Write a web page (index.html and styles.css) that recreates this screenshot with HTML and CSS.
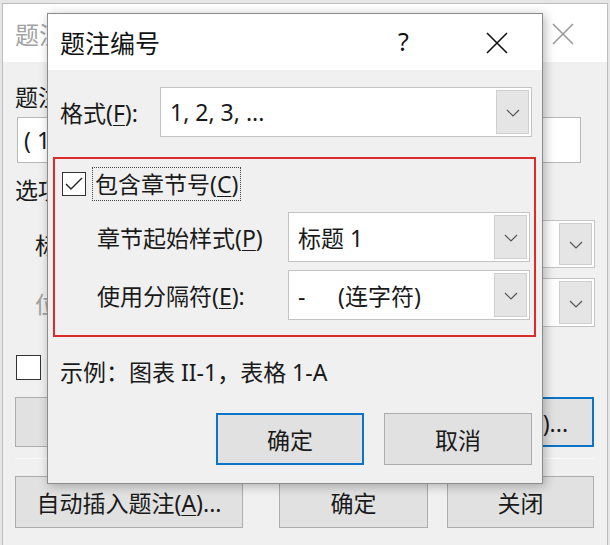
FILE: index.html
```html
<!DOCTYPE html>
<html lang="zh-CN">
<head>
<meta charset="utf-8">
<title>题注编号</title>
<link rel="stylesheet" href="styles.css">
</head>
<body>
<div class="desk">
  <div class="win bgwin">
    <div class="titlebar bg-titlebar">
      <span class="title">题注</span>
      <svg class="close" width="22" height="22" viewBox="0 0 22 22"><path d="M1 1L21 21M21 1L1 21" stroke="#9a9a9a" stroke-width="1.6" fill="none"/></svg>
    </div>
    <div class="bg-body">
      <div class="bg-label">题注(<u>C</u>):</div>
      <div class="bg-input">( 1 )</div>
      <div class="bg-label bg-opts">选项</div>
      <div class="bg-row">
        <span class="bg-rowlabel">标签(<u>L</u>):</span>
        <div class="select bg-select"><span class="sel-text">图表</span><span class="drop"><svg width="14" height="8" viewBox="0 0 14 8"><path d="M1 1L7 7L13 1" stroke="#555" stroke-width="1.2" fill="none"/></svg></span></div>
      </div>
      <div class="bg-row bg-row2">
        <span class="bg-rowlabel disabled">位置(<u>P</u>):</span>
        <div class="select bg-select"><span class="sel-text">所选项目下方</span><span class="drop"><svg width="14" height="8" viewBox="0 0 14 8"><path d="M1 1L7 7L13 1" stroke="#555" stroke-width="1.2" fill="none"/></svg></span></div>
      </div>
      <div class="bg-check">
        <span class="box"></span><span class="hidden-label">从题注中排除标签(<u>E</u>)</span>
      </div>
      <div class="bg-btns bg-btns1">
        <button class="btn b1">新建标签(<u>N</u>)...</button>
        <button class="btn b2">删除标签(<u>D</u>)</button>
        <button class="btn b3 default">编号(<u>U</u>)...</button>
      </div>
      <div class="sep"></div>
      <div class="bg-btns bg-btns2">
        <button class="btn b1">自动插入题注(<u>A</u>)...</button>
        <button class="btn b2">确定</button>
        <button class="btn b3">关闭</button>
      </div>
    </div>
  </div>

  <div class="win fgwin">
    <div class="titlebar fg-titlebar">
      <span class="title">题注编号</span>
      <span class="help">?</span>
      <svg class="close fg-close" width="22" height="22" viewBox="0 0 22 22"><path d="M1 1L21 21M21 1L1 21" stroke="#111" stroke-width="1.6" fill="none"/></svg>
    </div>
    <div class="fg-body">
      <div class="fg-row fmt-row">
        <span class="fg-label fmt-label">格式(<u>F</u>):</span>
        <div class="select fmt-select"><span class="sel-text">1, 2, 3, ...</span><span class="drop"><svg width="14" height="8" viewBox="0 0 14 8"><path d="M1 1L7 7L13 1" stroke="#555" stroke-width="1.2" fill="none"/></svg></span></div>
      </div>
      <div class="redbox">
        <div class="chk-row">
          <span class="box checked"><svg width="20" height="16" viewBox="0 0 20 16"><path d="M2 8L7 13L18 2" stroke="#222" stroke-width="1.4" fill="none"/></svg></span>
          <span class="focus">包含章节号(<u>C</u>)</span>
        </div>
        <div class="fg-row sub-row">
          <span class="fg-label sub-label">章节起始样式(<u>P</u>)</span>
          <div class="select sub-select"><span class="sel-text">标题 1</span><span class="drop"><svg width="14" height="8" viewBox="0 0 14 8"><path d="M1 1L7 7L13 1" stroke="#555" stroke-width="1.2" fill="none"/></svg></span></div>
        </div>
        <div class="fg-row sub-row sub-row2">
          <span class="fg-label sub-label">使用分隔符(<u>E</u>):</span>
          <div class="select sub-select"><span class="sel-text"><span class="dash">-</span>(连字符)</span><span class="drop"><svg width="14" height="8" viewBox="0 0 14 8"><path d="M1 1L7 7L13 1" stroke="#555" stroke-width="1.2" fill="none"/></svg></span></div>
        </div>
      </div>
      <div class="example">示例：图表 II-1，表格 1-A</div>
      <div class="fg-btns">
        <button class="btn default ok">确定</button>
        <button class="btn cancel">取消</button>
      </div>
    </div>
  </div>
</div>
</body>
</html>
```

FILE: styles.css
```css
* { box-sizing: border-box; }
html, body { margin: 0; padding: 0; }
body {
  width: 610px;
  height: 545px;
  overflow: hidden;
  background: #e6e6e6;
  font-family: "Noto Sans", "Noto Sans CJK SC", sans-serif;
  font-size: 23px;
  color: #1a1a1a;
}
.desk { position: relative; width: 610px; height: 545px; overflow: hidden; }
u { text-decoration: underline; text-underline-offset: 3px; text-decoration-thickness: 1px; }

.win { position: absolute; background: #f0f0f0; }

/* background dialog */
.bgwin { left: 2px; top: 3px; width: 606px; height: 600px; border: 1px solid #bdbdbd; }
.titlebar { display: flex; align-items: center; background: #fff; position: relative; }
.bg-titlebar { height: 58px; padding-left: 12px; }
.bg-titlebar .title { color: #a3a3a3; font-size: 24px; }
.bg-titlebar .close { position: absolute; left: 549px; top: 19px; }

.bg-body { padding: 0 13px 0 12px; }
.bg-label { margin-top: 20px; height: 30px; line-height: 30px; }
.bg-input {
  margin: 5px 0 0 2px; width: 564px; height: 46px;
  background: #fff; border: 1px solid #b8b8b8;
  line-height: 44px; padding-left: 6px;
}
.bg-opts { margin-top: 12px; }
.bg-row { display: flex; align-items: center; justify-content: space-between; margin-top: 15px; height: 48px; padding-left: 20px; }
.bg-row2 { margin-top: 10px; height: 49px; }
.disabled { color: #a0a0a0; }
.select {
  display: flex; align-items: center; justify-content: space-between;
  background: #fff; border: 1px solid #c4c4c4; height: 100%;
  padding: 2px 2px 2px 9px;
}
.sel-text { white-space: pre; }
.drop {
  width: 33px; height: 100%; display: flex; align-items: center; justify-content: center;
  background: #e5e5e5; border: 1px solid #cfcfcf; padding-top: 2px;
}
.bg-select { width: 330px; margin-right: -1px; }
.bg-check { display: flex; align-items: center; gap: 10px; margin-top: 28px; height: 25px; margin-left: 1px; }
.hidden-label { visibility: hidden; }
.box { width: 25px; height: 25px; border: 1.5px solid #333; background: #fff; display: flex; align-items: center; justify-content: center; flex: none; }
.bg-btns { display: flex; height: 50px; }
.bg-btns1 { margin-top: 17px; }
.bg-btns2 { margin-top: 17px; height: 52px; }
.btn {
  font: inherit; color: #1a1a1a; background: #e1e1e1;
  border: 1px solid #adadad; padding: 0; margin: 0; height: 100%;
}
.btn.default { border: 2px solid #0a74c8; }
.bg-btns .b1 { width: 228px; }
.bg-btns .b2 { width: 149px; margin-left: 36px; }
.bg-btns .b3 { width: 147px; margin-left: 19px; }
.sep { margin-top: 11px; height: 1px; background: #d9d9d9; border-bottom: 1px solid #fafafa; }

/* foreground dialog */
.fgwin {
  left: 47px; top: 13px; width: 496px; height: 471px;
  border: 1px solid #8c8c8c;
  box-shadow: 2px 2px 10px rgba(0,0,0,0.28);
}
.fg-titlebar { height: 56px; padding-left: 12px; }
.fg-titlebar .title { font-size: 25px; color: #111; }
.help { position: absolute; left: 350px; top: 10px; font-size: 25px; font-family: "Noto Sans", sans-serif; color: #111; }
.fg-close { position: absolute; left: 438px; top: 18px; }

.fg-body { padding: 0 10px 0 12px; }
.fg-row { display: flex; align-items: center; }
.fmt-row { margin-top: 17px; height: 50px; }
.fmt-label { width: 100px; flex: none; }
.fmt-select { flex: 1; }

.redbox {
  margin: 20px -4px 0 -7px;
  height: 180px;
  border: 2px solid #dc2b2b;
  padding: 9px 4px 0 7px;
}
.chk-row { display: flex; align-items: center; height: 32px; }
.chk-row .box { width: 24px; height: 24px; border: 1.5px solid #333; }
.focus { margin-left: 7px; outline: 1px dotted #444; outline-offset: 0; padding: 0 2px; line-height: 32px; height: 32px; }
.sub-row { margin-top: 12px; height: 50px; padding-left: 35px; }
.sub-row2 { margin-top: 8px; }
.sub-label { width: 191px; flex: none; }
.sub-select { flex: 1; }
.dash { display: inline-block; width: 40px; }

.example { margin-top: 21px; height: 28px; line-height: 28px; }
.fg-btns { display: flex; justify-content: flex-end; gap: 20px; margin-top: 27px; height: 52px; }
.fg-btns .btn { width: 148px; }
```
